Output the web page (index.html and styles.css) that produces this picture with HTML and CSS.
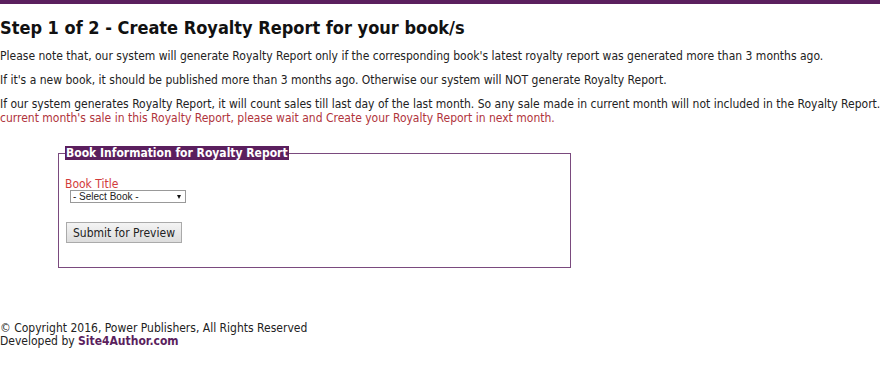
FILE: index.html
```html
<!DOCTYPE html>
<html lang="en">
<head>
  <meta charset="UTF-8">
  <title>Create Royalty Report</title>
  <link rel="stylesheet" href="styles.css">
</head>
<body>
  <div class="top-bar"></div>

  <div class="content">
    <h1>Step 1 of 2 - Create Royalty Report for your book/s</h1>
    <p>Please note that, our system will generate Royalty Report only if the corresponding book's latest royalty report was generated more than 3 months ago.</p>
    <p>If it's a new book, it should be published more than 3 months ago. Otherwise our system will NOT generate Royalty Report.</p>
    <p>If our system generates Royalty Report, it will count sales till last day of the last month. So any sale made in current month will not included in the Royalty Report.<br>
      <span class="note">current month's sale in this Royalty Report, please wait and Create your Royalty Report in next month.</span></p>

    <fieldset class="book-box">
      <legend>Book Information for Royalty Report</legend>
      <label class="field-label" for="book">Book Title</label>
      <div class="select-row">
        <span class="select-wrap">
          <select id="book" class="book-select">
            <option>- Select Book -</option>
          </select>
        </span>
      </div>
      <button class="btn">Submit for Preview</button>
    </fieldset>
  </div>

  <div class="footer">
    &copy; Copyright 2016, Power Publishers, All Rights Reserved<br>
    Developed by <a href="#" class="dev-link">Site4Author.com</a>
  </div>
</body>
</html>
```

FILE: styles.css
```css
* {
  box-sizing: border-box;
}

body {
  margin: 0;
  padding: 0;
  background: #fff;
  color: #222;
  font-family: 'DejaVu Sans Condensed', 'DejaVu Sans', sans-serif;
  font-size: 12px;
  overflow: hidden;
}

.top-bar {
  height: 4px;
  background: #5b1f5e;
}

.content {
  overflow: hidden;
}

h1 {
  margin: 14px 0 11px 0;
  font-size: 18px;
  line-height: 20px;
  font-weight: bold;
  color: #111;
}

p {
  margin: 0 0 10px 0;
  line-height: 14px;
  white-space: nowrap;
}

.note {
  color: #b0343c;
}

.book-box {
  width: 513px;
  margin: 21px 0 0 58px;
  padding: 18px 6px 24px 6px;
  border: 1px solid #7a4a7e;
}

.book-box legend {
  background: #5b1f5e;
  color: #fff;
  font-weight: bold;
  padding: 0 1px;
  line-height: 14px;
}

.field-label {
  display: block;
  color: #d23b3b;
  line-height: 12px;
}

.select-row {
  padding-left: 5px;
  margin-bottom: 19px;
  line-height: 13px;
}

.select-wrap {
  display: inline-block;
  position: relative;
  vertical-align: top;
}

/* small solid arrow like the old browser select */
.select-wrap::after {
  content: '';
  position: absolute;
  right: 5px;
  top: 5px;
  border-left: 2.5px solid transparent;
  border-right: 2.5px solid transparent;
  border-top: 4px solid #111;
  pointer-events: none;
}

.book-select {
  display: block;
  appearance: none;
  -webkit-appearance: none;
  width: 116px;
  height: 13px;
  font-family: 'Liberation Sans', Arial, sans-serif;
  font-size: 10px;
  line-height: 11px;
  color: #222;
  padding: 0 0 0 2px;
  border: 1px solid #999;
  border-radius: 0;
  background: #fff;
}

.btn {
  font-family: inherit;
  font-size: 12px;
  color: #222;
  background: linear-gradient(#f4f4f4, #dddddd);
  border: 1px solid #aaa;
  padding: 2px 6px;
  height: 21px;
  margin-left: 1px;
}

.footer {
  margin-top: 54px;
  line-height: 13px;
}

.dev-link {
  color: #5b1f5e;
  font-weight: bold;
  text-decoration: none;
}
```
